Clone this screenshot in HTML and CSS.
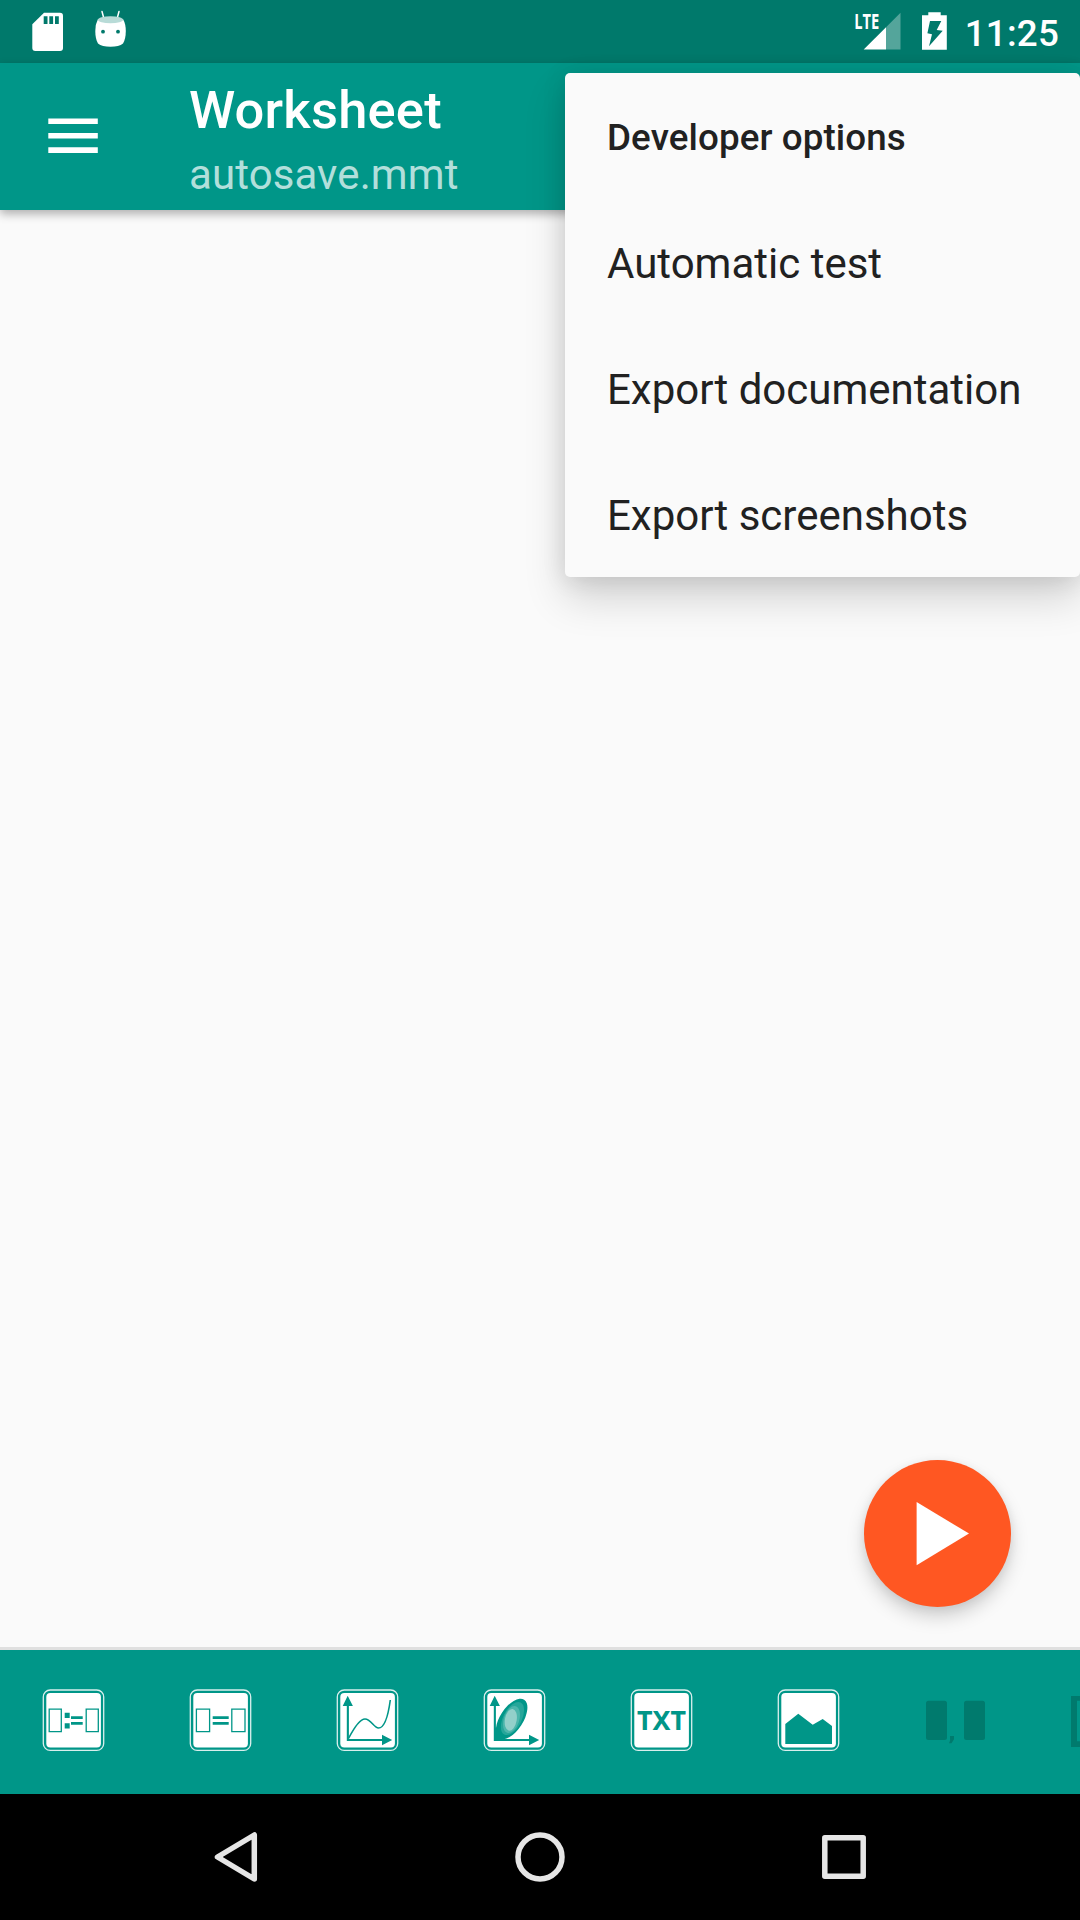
FILE: index.html
```html
<!DOCTYPE html>
<html lang="en">
<head>
<meta charset="utf-8">
<title>Worksheet</title>
<link rel="stylesheet" href="styles.css">
</head>
<body>
<div class="screen">
  <header class="status-bar">
    <svg class="status-icons" width="140" height="63" viewBox="0 0 140 63">
      <path fill="#fff" d="M44 12.700H60Q63 12.700 63 15.700V48Q63 51 60 51H35.300Q32.300 51 32.300 48V24.300Z"/>
      <path fill="#00796b" d="M43.700 16.300h3.800v7.700h-3.800zM49.300 16.300h3.800v7.700h-3.800zM55 16.300h3.800v7.700H55z"/>
      <path stroke="#fff" stroke-width="1.500" stroke-linecap="round" d="M102 11.500l2 7.500M119 11.500l-2 7.500"/>
      <path fill="#fff" d="M98 19Q95.300 24 95.300 31Q95.300 39 98 43.500Q102 46.700 110.500 46.700Q119 46.700 123 43.500Q125.800 39 125.800 31Q125.800 24 123 19Z"/>
      <ellipse cx="110.500" cy="19.800" rx="12.600" ry="3.500" fill="#b8dbd7"/>
      <circle cx="103" cy="31.700" r="1.900" fill="#00796b"/>
      <circle cx="118" cy="31.700" r="1.900" fill="#00796b"/>
    </svg>
    <div class="status-right">
      <svg width="100" height="63" viewBox="852 0 100 63">
        <path fill="#fff" fill-opacity=".33" d="M886 27.200L900.500 12.700V49.500H886Z"/>
        <path fill="#fff" d="M863.700 49.500L886 27.200V49.500Z"/>
        <text class="lte" x="854.200" y="29.300" textLength="25" lengthAdjust="spacingAndGlyphs">LTE</text>
        <path fill="#fff" d="M928.300 12.200h12.400v3h6.100v34.600H922V15.200h6.300z"/>
        <path fill="#00796b" d="M930 21h11.300l-4.600 9 6 .8-13.700 15.400 3-12-4.600-1z"/>
      </svg>
      <span class="clock">11:25</span>
    </div>
  </header>

  <div class="app-bar">
    <svg class="menu-icon" width="50" height="36" viewBox="0 0 50 36">
      <path fill="#fff" d="M.3.500h49.500v5.600H.3zM.3 15h49.500v5.400H.3zM.3 29.300h49.500v5.600H.3z"/>
    </svg>
    <div class="titles">
      <h1 class="title">Worksheet</h1>
      <p class="subtitle">autosave.mmt</p>
    </div>
  </div>

  <main class="worksheet">
    <button class="fab" aria-label="Run">
      <svg width="147" height="147" viewBox="0 0 147 147"><path fill="#fff" d="M52.600 42L105 73.600 52.600 105.200Z"/></svg>
    </button>
  </main>

  <div class="toolbar">
    <svg class="tool" viewBox="0 0 63 63">
      <rect class="frame" x="1.300" y="1" width="60.400" height="60.400" rx="7"/><rect class="face" x="4.300" y="4" width="54.600" height="54.600" rx="4"/>
      <path class="outline" d="M7.200 20.200h12.100v22.400H7.200zM44.200 20.200h12.100v22.400H44.200z"/>
      <path class="ink" d="M22.700 23.800h5v5.200h-5zM22.700 34.200h5v5.200h-5zM29 27.300h11.700V30H29zM29 33h11.700v2.700H29z"/>
    </svg>
    <svg class="tool" viewBox="0 0 63 63">
      <rect class="frame" x="1.300" y="1" width="60.400" height="60.400" rx="7"/><rect class="face" x="4.300" y="4" width="54.600" height="54.600" rx="4"/>
      <path class="outline" d="M7.400 20.200h13.200v22.400H7.400zM42.800 20.200H56v22.400H42.800z"/>
      <path class="ink" d="M23.700 27.300h16V30h-16zM23.700 33h16v2.700h-16z"/>
    </svg>
    <svg class="tool" viewBox="0 0 63 63">
      <rect class="frame" x="1.300" y="1" width="60.400" height="60.400" rx="7"/><rect class="face" x="4.300" y="4" width="54.600" height="54.600" rx="4"/>
      <path class="ink" d="M10.800 17H6.700L11.700 6.700 16.900 17H12.900V50H46V45.800L56.200 51 46 56.200V52H10.800Z"/>
      <path class="curve" d="M12.500 49.500C19 37 24 30 29 30C35 30 38 39 42.500 39C48 39 52 28 54.300 11"/>
    </svg>
    <svg class="tool" viewBox="0 0 63 63">
      <rect class="frame" x="1.300" y="1" width="60.400" height="60.400" rx="7"/><rect class="face" x="4.300" y="4" width="54.600" height="54.600" rx="4"/>
      <path class="ink" d="M10.800 17H6.700L11.700 6.700 16.900 17H12.900V50H46V45.800L56.200 51 46 56.200V52H10.800Z"/>
      <ellipse fill="#009688" cx="28.600" cy="30" rx="11.500" ry="23" transform="rotate(33 28.600 30)"/>
      <path fill="#009688" d="M12 38L22 50.500H12Z"/>
      <ellipse fill="#26a69a" cx="29.500" cy="29.500" rx="9.200" ry="18" transform="rotate(27 29.500 29.500)"/>
      <ellipse fill="#4db6ac" cx="28.500" cy="30.500" rx="7.700" ry="14" transform="rotate(18 28.500 30.500)"/>
      <ellipse fill="#93d0ca" cx="27.800" cy="30.800" rx="5.900" ry="11" transform="rotate(10 27.800 30.800)"/>
    </svg>
    <svg class="tool" viewBox="0 0 63 63">
      <rect class="frame" x="1.300" y="1" width="60.400" height="60.400" rx="7"/><rect class="face" x="4.300" y="4" width="54.600" height="54.600" rx="4"/>
      <text class="txt" x="7" y="41" textLength="49" lengthAdjust="spacingAndGlyphs">TXT</text>
    </svg>
    <svg class="tool" viewBox="0 0 63 63">
      <rect class="frame" x="1.300" y="1" width="60.400" height="60.400" rx="7"/><rect class="face" x="4.300" y="4" width="54.600" height="54.600" rx="4"/>
      <path class="ink" d="M8.300 35L21.300 24.700 35.700 35.700 45.700 30 55 37V55H8.300Z"/>
    </svg>
    <svg class="tool disabled" viewBox="0 0 63 63">
      <rect x="2" y="11.700" width="21" height="39.300" rx="2.500"/><rect x="40" y="11.700" width="21" height="39.300" rx="2.500"/>
      <path d="M26 47H30V50.300L27.500 54.300H25L26.400 50.800H26Z"/>
    </svg>
    <svg class="tool disabled" viewBox="0 0 63 63">
      <path fill-rule="evenodd" d="M0 7H63V58H0ZM6 11.800V52.300H57V11.800Z"/>
    </svg>
  </div>

  <nav class="nav-bar">
    <svg width="54" height="54" viewBox="0 0 54 54"><path class="nav-line" d="M45.300 5V49L8.500 27Z"/></svg>
    <svg width="54" height="54" viewBox="0 0 54 54"><circle class="nav-line" cx="27" cy="27" r="22"/></svg>
    <svg width="54" height="54" viewBox="0 0 54 54"><rect class="nav-line" x="7.800" y="7.800" width="38.400" height="38.400"/></svg>
  </nav>

  <div class="popup">
    <div class="popup-header">Developer options</div>
    <div class="popup-item">Automatic test</div>
    <div class="popup-item">Export documentation</div>
    <div class="popup-item">Export screenshots</div>
  </div>
</div>
</body>
</html>
```
FILE: styles.css
```css
* { box-sizing: border-box; }

body {
  margin: 0;
  background: #fafafa;
  font-family: Roboto, "Noto Sans", sans-serif;
}

svg { display: block; flex: none; }

.screen {
  position: relative;
  display: flex;
  flex-direction: column;
  width: 1080px;
  height: 1920px;
  overflow: hidden;
  background: #fafafa;
}

.status-bar {
  display: flex;
  justify-content: space-between;
  flex: none;
  height: 63px;
  background: #00796b;
}

.status-right {
  display: flex;
  gap: 13px;
  padding-right: 21px;
}

.lte {
  fill: #fff;
  font-family: "Open Sans", sans-serif;
  font-size: 22px;
  font-weight: 700;
}

.clock {
  padding-top: 4px;
  color: #fff;
  font-size: 36.750px;
  font-weight: 500;
  letter-spacing: .2px;
  line-height: 60px;
}

.app-bar {
  z-index: 1;
  display: flex;
  flex: none;
  height: 147px;
  padding-left: 48px;
  background: #009688;
  box-shadow: 0 4px 9px rgba(0, 0, 0, .3);
}

.menu-icon { margin: 55px 91px 0 0; }

.titles { padding-top: 16px; }

.title {
  margin: 0;
  color: #fff;
  font-size: 52.500px;
  font-weight: 500;
  letter-spacing: .2px;
  line-height: 62px;
}

.subtitle {
  margin: 0;
  padding-top: 9px;
  color: #b2dfdb;
  font-size: 42px;
  letter-spacing: .1px;
  line-height: 50px;
}

.worksheet {
  display: flex;
  flex: 1;
  align-items: flex-end;
  justify-content: flex-end;
  padding: 0 69px 40px;
}

.fab {
  width: 147px;
  height: 147px;
  padding: 0;
  border: 0;
  border-radius: 50%;
  background: #ff5722;
  box-shadow: 0 10px 18px rgba(0, 0, 0, .17), 0 2px 10px rgba(0, 0, 0, .07);
}

.toolbar {
  display: flex;
  flex: none;
  gap: 84px;
  height: 147px;
  padding: 39px 0 0 42px;
  overflow: hidden;
  border-top: 3px solid #e0e0e0;
  background: #009688;
}

.tool { width: 63px; height: 63px; }
.frame { fill: none; stroke: #d9efed; stroke-width: 1.300px; }
.face { fill: #fff; }
.outline { fill: none; stroke: #009688; stroke-width: 1.300px; }
.ink { fill: #009688; }
.curve { fill: none; stroke: #009688; stroke-width: 1.600px; }
.disabled { fill: #007a6d; }

.txt {
  fill: #009688;
  font-family: "Noto Sans", sans-serif;
  font-size: 26.600px;
  font-weight: 700;
}

.nav-bar {
  display: flex;
  flex: none;
  gap: 250px;
  justify-content: center;
  height: 126px;
  padding-top: 36px;
  background: #000;
}

.nav-line {
  fill: none;
  stroke: #e6e6e6;
  stroke-width: 5.500px;
  stroke-linejoin: round;
}

.popup {
  position: absolute;
  z-index: 2;
  top: 73px;
  right: 0;
  width: 515px;
  border-radius: 5px;
  background: #fafafa;
  box-shadow: 0 21px 42px rgba(0, 0, 0, .16), 0 2px 24px rgba(0, 0, 0, .11);
}

.popup-header,
.popup-item {
  height: 126px;
  padding: 3px 0 0 42px;
  color: #212121;
  line-height: 123px;
  white-space: nowrap;
}

.popup-header {
  font-size: 36.750px;
  font-weight: 500;
  letter-spacing: .1px;
}

.popup-item { font-size: 42px; }
```
